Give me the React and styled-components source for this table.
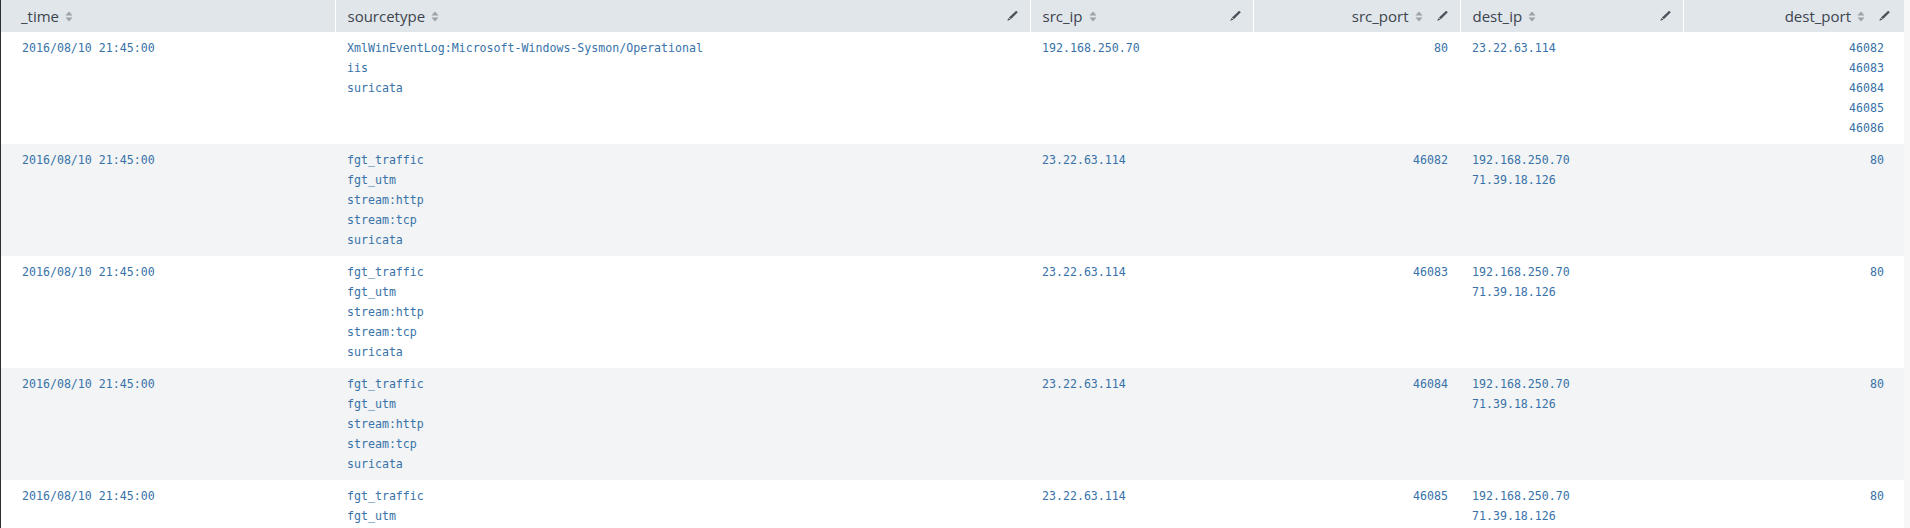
import styled, { createGlobalStyle } from 'styled-components';

const GlobalStyle = createGlobalStyle`
    html, body {
        margin: 0;
        padding: 0;
        background: #ffffff;
        overflow: hidden;
    }
    #root {
        height: 528px;
    }
`

const Page = styled.div`
    display: flex;
    width: 1910px;
    height: 528px;
    box-sizing: border-box;
    border-left: 1px solid #2b2f33;
    overflow: hidden;
`

const Scroller = styled.div`
    flex: 1;
    overflow: hidden;
`

const Track = styled.div`
    width: 6px;
    background: #f7f7f7;
`

const Table = styled.table`
    width: 1903px;
    table-layout: fixed;
    border-collapse: collapse;
    border-spacing: 0;
`

const HeadCell = styled.th`
    height: 32px;
    padding: 0 ${p => p.$last ? 14 : 12}px 0 ${p => p.$first ? 20 : 12}px;
    background: #e1e6eb;
    border-right: ${p => p.$last ? 'none' : '1px solid #ffffff'};
    font-family: "Open Sans", "Liberation Sans", sans-serif;
    font-size: 15px;
    font-weight: 400;
    color: #3c444d;
    text-align: left;
    box-sizing: border-box;
`

const HeadInner = styled.div`
    display: flex;
    align-items: center;
    justify-content: ${p => p.$right ? 'flex-end' : 'flex-start'};
    gap: 6px;
`

const Label = styled.span`
    white-space: nowrap;
`

const EditSlot = styled.span`
    display: flex;
    align-items: center;
    margin-left: ${p => p.$right ? '8px' : 'auto'};
`

const Row = styled.tr`
    background: ${p => p.$alt ? '#f2f4f5' : '#ffffff'};
`

const Cell = styled.td`
    vertical-align: top;
    padding: 6px ${p => p.$last ? 20 : 12}px 6px ${p => p.$first ? 21 : 12}px;
    text-align: ${p => p.$right ? 'right' : 'left'};
    font-family: "DejaVu Sans Mono", "Liberation Mono", monospace;
    font-size: 11.6px;
    line-height: 20px;
    color: #3872a8;
    white-space: nowrap;
    box-sizing: border-box;
`

const Value = styled.div`
    height: 20px;
`

function SortIcon() {
    return (
        <svg width="8" height="11" viewBox="0 0 8 11">
            <path d="M4 0.5 L7.5 4.5 L0.5 4.5 Z" fill="#9aa2aa" />
            <path d="M4 10.5 L7.5 6.5 L0.5 6.5 Z" fill="#9aa2aa" />
        </svg>
    )
}

function EditIcon() {
    return (
        <svg width="11" height="10" viewBox="0 0 11 10">
            <path d="M10.8 1.2 L9.2 -0.3 L2.0 6.6 L3.8 8.3 Z" fill="#4a525b" />
            <path d="M1.6 7.0 L3.4 8.7 L0.2 9.8 Z" fill="#4a525b" />
        </svg>
    )
}

const columns = [
    { key: 'time', label: '_time', width: 334, edit: false },
    { key: 'sourcetype', label: 'sourcetype', width: 695, edit: true },
    { key: 'src_ip', label: 'src_ip', width: 223, edit: true },
    { key: 'src_port', label: 'src_port', width: 207, edit: true, right: true },
    { key: 'dest_ip', label: 'dest_ip', width: 223, edit: true },
    { key: 'dest_port', label: 'dest_port', width: 221, edit: true, right: true },
];

const fgt = ['fgt_traffic', 'fgt_utm', 'stream:http', 'stream:tcp', 'suricata'];
const dests = ['192.168.250.70', '71.39.18.126'];

const rows = [
    {
        time: ['2016/08/10 21:45:00'],
        sourcetype: ['XmlWinEventLog:Microsoft-Windows-Sysmon/Operational', 'iis', 'suricata'],
        src_ip: ['192.168.250.70'],
        src_port: ['80'],
        dest_ip: ['23.22.63.114'],
        dest_port: ['46082', '46083', '46084', '46085', '46086'],
    },
    ...['46082', '46083', '46084', '46085'].map(port => ({
        time: ['2016/08/10 21:45:00'],
        sourcetype: fgt,
        src_ip: ['23.22.63.114'],
        src_port: [port],
        dest_ip: dests,
        dest_port: ['80'],
    })),
];

function App() {
    return (
        <>
            <GlobalStyle />
            <Page>
                <Scroller>
                    <Table>
                        <colgroup>
                            {columns.map(c => <col key={c.key} style={{ width: c.width }} />)}
                        </colgroup>
                        <thead>
                            <tr>
                                {columns.map((c, i) => (
                                    <HeadCell key={c.key} $first={i === 0} $last={i === columns.length - 1}>
                                        <HeadInner $right={c.right}>
                                            <Label>{c.label}</Label>
                                            <SortIcon />
                                            {c.edit && <EditSlot $right={c.right}><EditIcon /></EditSlot>}
                                        </HeadInner>
                                    </HeadCell>
                                ))}
                            </tr>
                        </thead>
                        <tbody>
                            {rows.map((r, ri) => (
                                <Row key={ri} $alt={ri % 2 === 1}>
                                    {columns.map((c, i) => (
                                        <Cell key={c.key} $right={c.right} $first={i === 0} $last={i === columns.length - 1}>
                                            {r[c.key].map((v, vi) => <Value key={vi}>{v}</Value>)}
                                        </Cell>
                                    ))}
                                </Row>
                            ))}
                        </tbody>
                    </Table>
                </Scroller>
                <Track />
            </Page>
        </>
    )
}

export default App;
